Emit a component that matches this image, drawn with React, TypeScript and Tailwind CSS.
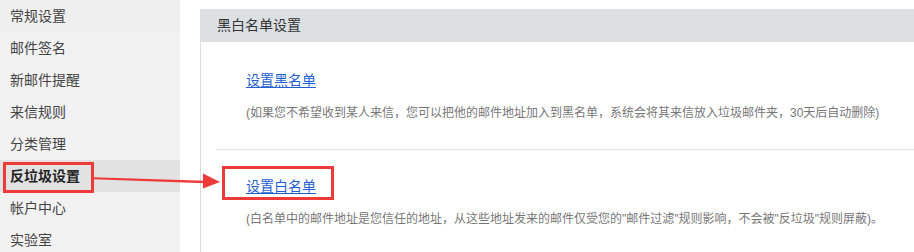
const menu = ['常规设置', '邮件签名', '新邮件提醒', '来信规则', '分类管理', '反垃圾设置', '帐户中心', '实验室'];

export default function App() {
  return (
    <div
      className="relative flex h-[252px] w-[914px] overflow-hidden bg-white text-[#333]"
      style={{ fontFamily: '"Liberation Sans", "Noto Sans CJK SC", sans-serif' }}
    >
      {/* left menu */}
      <div className="w-[180px] shrink-0 bg-[#f2f2f2]">
        {menu.map((item, i) => (
          <div
            key={item}
            className={`flex h-[32px] items-center pl-[10px] text-[14px] ${
              i === 5 ? 'bg-[#e2e2e2] font-bold text-[#222]' : i === 0 ? 'bg-[#efefef] text-[#444]' : 'text-[#444]'
            }`}
          >
            {item}
          </div>
        ))}
      </div>

      {/* content */}
      <div className="ml-[20px] flex-1 pt-[9px]">
        <div className="flex h-[33px] items-center bg-[#dde0e3] pl-[17px] text-[14px] text-[#333]">黑白名单设置</div>
        <div className="h-[210px] border-l border-[#dcdcdc]">
          <div className="ml-[15px] border-b border-[#e2e2e2] pb-[26px] pl-[30px] pt-[26px]">
            <a href="#" className="text-[14px] leading-[20px] text-[#1f5fcf] underline underline-offset-2">
              设置黑名单
            </a>
            <p className="mt-[11px] text-[12px] leading-[20px] text-[#777]">
              (如果您不希望收到某人来信，您可以把他的邮件地址加入到黑名单，系统会将其来信放入垃圾邮件夹，30天后自动删除)
            </p>
          </div>
          <div className="ml-[15px] pl-[30px] pt-[24px]">
            <a href="#" className="text-[14px] leading-[20px] text-[#1f5fcf] underline underline-offset-2">
              设置白名单
            </a>
            <p className="mt-[11px] text-[12px] leading-[20px] text-[#777]">
              (白名单中的邮件地址是您信任的地址，从这些地址发来的邮件仅受您的"邮件过滤"规则影响，不会被"反垃圾"规则屏蔽)。
            </p>
          </div>
        </div>
      </div>

      {/* annotation overlays */}
      <div className="absolute left-[3px] top-[162px] h-[31px] w-[91px] border-[3px] border-[#ef3a3a]" />
      <div className="absolute left-[222px] top-[166px] h-[34px] w-[112px] border-[3px] border-[#ef3a3a]" />
      <svg className="absolute left-0 top-0" width="914" height="252" viewBox="0 0 914 252">
        <path d="M93 177.2 L205 180.8 L205 183.2 L93 179.2 Z" fill="#ef3a3a" />
        <polygon points="203,173.5 220,182 203,188.5" fill="#ef3a3a" />
      </svg>
    </div>
  );
}
